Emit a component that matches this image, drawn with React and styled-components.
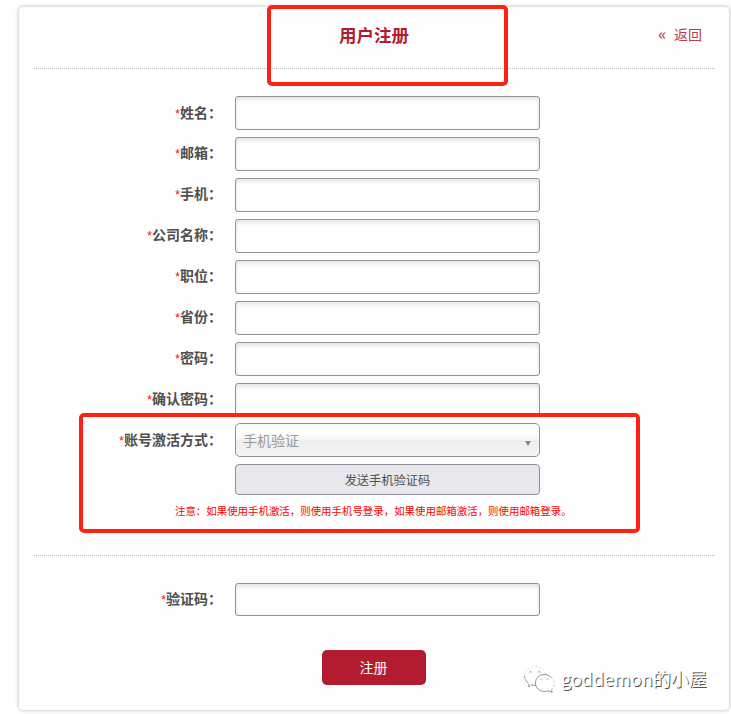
import styled, { createGlobalStyle } from "styled-components";
import { useState } from "react";

const fields = [
  { name: "name", label: "姓名", lineHeight: 33 },
  { name: "email", label: "邮箱" },
  { name: "phone", label: "手机" },
  { name: "company", label: "公司名称" },
  { name: "position", label: "职位" },
  { name: "province", label: "省份" },
  { name: "password", label: "密码", type: "password" },
  { name: "confirm", label: "确认密码", type: "password" },
];

export default function App() {
  const [values, setValues] = useState({});

  const handleChange = (event) => {
    setValues({ ...values, [event.target.name]: event.target.value });
  };

  const handleSubmit = (event) => {
    event.preventDefault();
  };

  return (
    <>
      <GlobalStyle />
      <Card>
        <Header>
          <Title>用户注册</Title>
          <BackLink href="#">
            <span>«</span>返回
          </BackLink>
        </Header>
        <form onSubmit={handleSubmit}>
          <Fields>
            {fields.map((field) => (
              <Row key={field.name}>
                <Label $lineHeight={field.lineHeight}><Star>*</Star>{field.label}：</Label>
                <InputField
                  type={field.type || "text"}
                  name={field.name}
                  value={values[field.name] || ""}
                  onChange={handleChange}
                />
              </Row>
            ))}
            <Row $pull>
              <Label $lineHeight={33}><Star>*</Star>账号激活方式：</Label>
              <SelectBox>
                手机验证
                <Caret viewBox="0 0 6 5">
                  <path d="M0 0h6L3 5z" fill="#888" />
                </Caret>
              </SelectBox>
            </Row>
            <Row $height={31}>
              <Label />
              <CodeButton type="button">发送手机验证码</CodeButton>
            </Row>
            <Note>注意：如果使用手机激活，则使用手机号登录，如果使用邮箱激活，则使用邮箱登录。</Note>
          </Fields>
          <CodeSection>
            <Row $height={33}>
              <Label><Star>*</Star>验证码：</Label>
              <InputField
                $height={33}
                type="text"
                name="code"
                value={values.code || ""}
                onChange={handleChange}
              />
            </Row>
          </CodeSection>
          <SubmitButton type="submit">注册</SubmitButton>
        </form>
      </Card>
      <Highlight $x={267} $y={5} $w={241} $h={81} />
      <Highlight $x={79} $y={413} $w={561} $h={120} />
      <Watermark>
        <WechatIcon />
        <span>goddemon的小屋</span>
      </Watermark>
    </>
  );
}

function WechatIcon() {
  return (
    <svg width="32" height="28" viewBox="0 0 32 28" fill="none" stroke="#666" strokeWidth="0.7">
      <path d="M13 20.300c-2 .2-3.600 0-5-.5L6 22l-.5-3.500C3.500 17 2 14.500 1.500 11" strokeDasharray="5 1" />
      <path d="M1.500 11C1.500 5.500 6 1.500 12 1.500S22 5 22.700 9" stroke="#ccc" strokeDasharray="2 2" />
      <path d="M6.500 7.500c.5-1.200 2-1.200 2.500 0M15 7.500c.5-1.200 2-1.200 2.500 0" />
      <path d="M28 12.500c-1.700-1.900-4-3-6.700-3C16.200 9.500 12.500 13.300 12.500 18s3.700 8.500 8.800 8.500c1.300 0 2.500-.3 3.700-.7l4.200 1.600-.7-2.800" />
      <path d="M28.500 24.600c1.900-1.700 3-4 3-6.600 0-2.200-1.400-4-3.500-5.500" stroke="#aaa" strokeDasharray="2 2" />
      <path d="M17 14.500c.5-.8 1.500-.8 2 0M23.500 14.500c.5-.8 1.500-.8 2 0" stroke="#888" />
    </svg>
  );
}

const GlobalStyle = createGlobalStyle`
  * {
    box-sizing: border-box;
  }

  body {
    margin: 0;
    min-height: 100vh;
    padding: 7px 0 0 19px;
    overflow: hidden;
    background-color: #fff;
    font-family: "Noto Sans CJK SC", sans-serif;
  }
`;

const Card = styled.div`
  width: 710px;
  height: 703px;
  padding: 0 14px 0 15px;
  border-radius: 4px;
  background-color: #fefefe;
  box-shadow: 0 0 4px rgba(0, 0, 0, 0.3);
`;

const Header = styled.div`
  display: grid;
  grid-template-columns: 1fr auto 1fr;
  align-items: center;
  height: 62px;
  padding-bottom: 6px;
  border-bottom: 1px dotted #bbb;
`;

const Title = styled.h1`
  grid-column: 2;
  margin: 0 1px 0 0;
  font-size: 17.5px;
  line-height: 24px;
  color: #b31b2e;
`;

const BackLink = styled.a`
  justify-self: end;
  margin: 0 13px 1px 0;
  font-size: 14px;
  line-height: 20px;
  color: #b5404f;
  text-decoration: none;

  span {
    margin-right: 8px;
    font-family: "Open Sans", sans-serif;
    font-size: 16px;
    line-height: 0;
  }
`;

const Fields = styled.div`
  display: flex;
  flex-direction: column;
  gap: 7px;
  height: 487px;
  padding-top: 27px;
  border-bottom: 1px dotted #bbb;
`;

const Row = styled.div`
  display: flex;
  align-items: flex-start;
  height: ${(props) => props.$height || 34}px;
  margin-top: ${(props) => (props.$pull ? "-1px" : "0")};
`;

const Label = styled.label`
  width: 188px;
  margin-right: 13px;
  text-align: right;
  font-size: 14px;
  font-weight: bold;
  line-height: ${(props) => props.$lineHeight || 31}px;
  color: #4f4f4f;
`;

const Star = styled.span`
  font-family: "Liberation Sans", sans-serif;
  font-size: 12px;
  font-weight: normal;
  line-height: 0;
  color: #f00;
`;

const InputField = styled.input`
  width: 305px;
  height: ${(props) => props.$height || 34}px;
  padding: 0 8px;
  border: 1px solid #939393;
  border-radius: 3px;
  outline: none;
  background-color: #fff;
  box-shadow: inset 0 2px 5px rgba(0, 0, 0, 0.13);
  font-size: 14px;
`;

const SelectBox = styled.div`
  display: flex;
  align-items: center;
  justify-content: space-between;
  width: 305px;
  height: 34px;
  padding: 0 8px 0 7px;
  border: 1px solid #8f8f8f;
  border-radius: 5px;
  background: linear-gradient(#fff 20%, #f6f6f6 50%, #eee 52%, #f4f4f4 100%);
  font-size: 14px;
  color: #999;
`;

const Caret = styled.svg`
  width: 6px;
  height: 5px;
  margin-top: 6px;
`;

const CodeButton = styled.button`
  width: 305px;
  height: 31px;
  padding: 0;
  border: 1px solid #8f8c9c;
  border-radius: 4px;
  background-color: #e8e7ec;
  font-family: inherit;
  font-size: 12.25px;
  color: #505050;
`;

const Note = styled.p`
  margin: 0 0 0 141px;
  font-size: 10.45px;
  line-height: 18px;
  white-space: nowrap;
  color: #f00;
`;

const CodeSection = styled.div`
  padding: 27px 0 34px;
`;

const SubmitButton = styled.button`
  display: block;
  width: 104px;
  height: 35px;
  margin-left: 288px;
  padding: 0 1px 1px 0;
  border: none;
  border-radius: 5px;
  background-color: #b31b2e;
  font-family: inherit;
  font-size: 14px;
  color: #fff;
`;

// hand drawn style marker lying over the form
const Highlight = styled.div`
  position: absolute;
  left: ${(props) => props.$x}px;
  top: ${(props) => props.$y}px;
  width: ${(props) => props.$w}px;
  height: ${(props) => props.$h}px;
  border: 4px solid #ff2212;
  border-radius: 5px;
  pointer-events: none;
`;

const Watermark = styled.div`
  position: absolute;
  left: 523px;
  top: 665px;
  display: flex;
  align-items: center;
  gap: 6px;
  font-size: 18px;
  line-height: 28px;
  white-space: nowrap;
  color: #fff;
  text-shadow: 1px 1px 0 #555;

  span {
    margin-top: -2px;
  }
`;
